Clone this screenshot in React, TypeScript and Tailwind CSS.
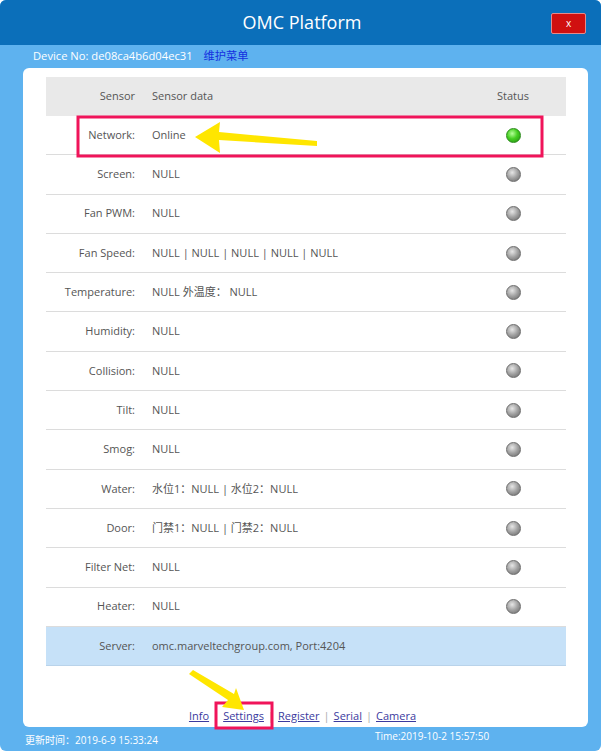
import React from 'react';

const rows: { label: string; data: string; dot?: 'on' | 'off' }[] = [
  { label: 'Network:', data: 'Online', dot: 'on' },
  { label: 'Screen:', data: 'NULL', dot: 'off' },
  { label: 'Fan PWM:', data: 'NULL', dot: 'off' },
  { label: 'Fan Speed:', data: 'NULL | NULL | NULL | NULL | NULL', dot: 'off' },
  { label: 'Temperature:', data: 'NULL 外温度： NULL', dot: 'off' },
  { label: 'Humidity:', data: 'NULL', dot: 'off' },
  { label: 'Collision:', data: 'NULL', dot: 'off' },
  { label: 'Tilt:', data: 'NULL', dot: 'off' },
  { label: 'Smog:', data: 'NULL', dot: 'off' },
  { label: 'Water:', data: '水位1：NULL | 水位2：NULL', dot: 'off' },
  { label: 'Door:', data: '门禁1：NULL | 门禁2：NULL', dot: 'off' },
  { label: 'Filter Net:', data: 'NULL', dot: 'off' },
  { label: 'Heater:', data: 'NULL', dot: 'off' },
];

const links = ['Info', 'Settings', 'Register', 'Serial', 'Camera'];

function Dot({ on }: { on: boolean }) {
  return (
    <span
      className={
        on
          ? 'block h-[15px] w-[15px] rounded-full border border-[#2a8a1a] bg-[radial-gradient(circle_at_40%_35%,#b6ff9a_0%,#46cf22_45%,#1f8a10_100%)]'
          : 'block h-[15px] w-[15px] rounded-full border border-[#6d6d6d] bg-[radial-gradient(circle_at_40%_35%,#e6e6e6_0%,#a0a0a0_50%,#666666_100%)]'
      }
    />
  );
}

export default function App() {
  return (
    <div className="relative h-[754px] w-[603px] bg-white font-['Open_Sans','Noto_Sans_CJK_SC',sans-serif]">
      <div className="flex h-[751px] w-[601px] flex-col overflow-hidden rounded-md bg-[#5eb2ef]">
        {/* title bar */}
        <div className="relative flex h-[45px] items-center justify-center bg-[#0b6fba]">
          <span className="ml-[3px] text-[18px] text-white">OMC Platform</span>
          <button className="absolute right-[15px] top-[13px] flex h-[21px] w-[35px] items-center justify-center rounded-[2px] border border-[#e58a8a] bg-[#d01010] text-[10px] text-white">
            x
          </button>
        </div>

        <div className="flex h-[23px] items-center gap-[11px] pl-[33px] text-[11.2px]">
          <span className="text-white">Device No: de08ca4b6d04ec31</span>
          <span className="text-[#1530e0]">维护菜单</span>
        </div>

        {/* card */}
        <div className="ml-[23px] flex h-[659px] w-[565px] flex-col rounded-md bg-white pl-[23px] pr-[22px] pt-[9px]">
          <div className="grid h-[39px] grid-cols-[89px_1fr_106px] items-center bg-[#e9e9e9] text-[11px] text-[#555]">
            <span className="text-right">Sensor</span>
            <span className="pl-[17px]">Sensor data</span>
            <span className="text-center">Status</span>
          </div>
          {rows.map((r) => (
            <div
              key={r.label}
              className="grid h-[39.3px] grid-cols-[89px_1fr_106px] items-center border-b border-[#dcdcdc] text-[11px] text-[#555]"
            >
              <span className="text-right">{r.label}</span>
              <span className="pl-[17px]">{r.data}</span>
              <span className="flex justify-center">
                <Dot on={r.dot === 'on'} />
              </span>
            </div>
          ))}
          <div className="grid h-[39.3px] grid-cols-[89px_1fr_106px] items-center border-b border-[#b9d3ea] bg-[#c6e1f8] text-[11px] text-[#555]">
            <span className="text-right">Server:</span>
            <span className="pl-[17px]">omc.marveltechgroup.com, Port:4204</span>
            <span />
          </div>

          <div className="mt-auto mb-[3px] mr-[7px] flex items-center justify-center gap-[4px] text-[11px]">
            {links.map((l, i) => (
              <React.Fragment key={l}>
                {i > 0 && <span className="text-[#aaa]">|</span>}
                <a href="#" className="text-[#3b3a9e] underline">
                  {l}
                </a>
              </React.Fragment>
            ))}
          </div>
        </div>

        <div className="flex h-[24px] items-center text-[10px] text-white">
          <span className="ml-[25px] mt-[3px] w-[350px]">更新时间：2019-6-9 15:33:24</span>
          <span className="-mt-[5px]">Time:2019-10-2 15:57:50</span>
        </div>
      </div>

      {/* annotations */}
      <svg className="pointer-events-none absolute left-0 top-0" width="603" height="754">
        <rect x="78" y="117" width="464" height="39" fill="none" stroke="#f0145a" strokeWidth="3" />
        <polygon points="195,137 220,122 219,132 317,141 317,146 219,140 220,153" fill="#ffe600" />
        <rect x="216" y="703" width="56" height="25" fill="none" stroke="#f0145a" strokeWidth="3" />
        <polygon points="189,674 193,670 234,694 236,688 244,710 222,707 228,700" fill="#ffe600" />
      </svg>
    </div>
  );
}
